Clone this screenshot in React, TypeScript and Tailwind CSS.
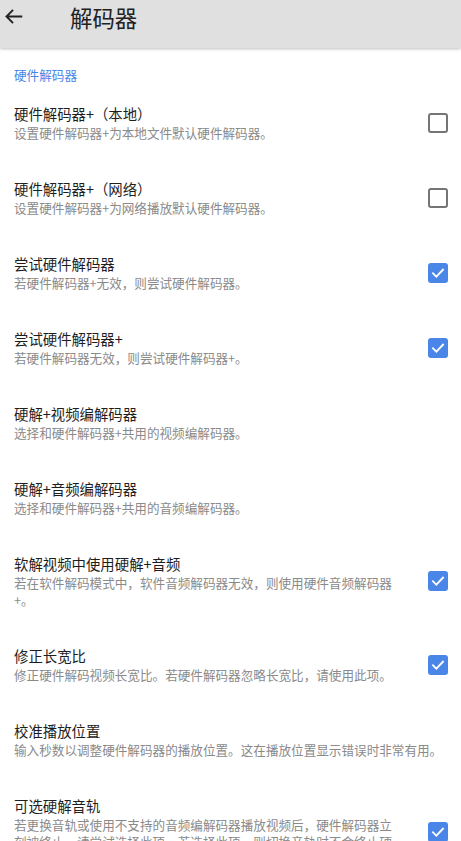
import React from "react";

const font = { fontFamily: '"Noto Sans CJK SC", "Noto Sans", sans-serif' };

type Item = {
  title: string;
  summary: string;
  checked?: boolean;
};

const items: Item[] = [
  { title: "硬件解码器+（本地）", summary: "设置硬件解码器+为本地文件默认硬件解码器。", checked: false },
  { title: "硬件解码器+（网络）", summary: "设置硬件解码器+为网络播放默认硬件解码器。", checked: false },
  { title: "尝试硬件解码器", summary: "若硬件解码器+无效，则尝试硬件解码器。", checked: true },
  { title: "尝试硬件解码器+", summary: "若硬件解码器无效，则尝试硬件解码器+。", checked: true },
  { title: "硬解+视频编解码器", summary: "选择和硬件解码器+共用的视频编解码器。" },
  { title: "硬解+音频编解码器", summary: "选择和硬件解码器+共用的音频编解码器。" },
  {
    title: "软解视频中使用硬解+音频",
    summary: "若在软件解码模式中，软件音频解码器无效，则使用硬件音频解码器+。",
    checked: true,
  },
  { title: "修正长宽比", summary: "修正硬件解码视频长宽比。若硬件解码器忽略长宽比，请使用此项。", checked: true },
  { title: "校准播放位置", summary: "输入秒数以调整硬件解码器的播放位置。这在播放位置显示错误时非常有用。" },
  {
    title: "可选硬解音轨",
    summary: "若更换音轨或使用不支持的音频编解码器播放视频后，硬件解码器立刻被终止，请尝试选择此项。若选择此项，则切换音轨时不会终止硬件解码器。",
    checked: true,
  },
];

function Checkbox({ checked }: { checked: boolean }) {
  if (checked) {
    return (
      <div className="w-[20px] h-[20px] rounded-[3px] bg-[#4a86e8] flex items-center justify-center">
        <svg width="16" height="16" viewBox="0 0 24 24" fill="none">
          <path d="M4.5 12.5l5 5L19.5 7" stroke="white" strokeWidth="2.8" strokeLinecap="square" />
        </svg>
      </div>
    );
  }
  return <div className="w-[20px] h-[20px] rounded-[3px] border-2 border-[#757575]" />;
}

function Row({ item }: { item: Item }) {
  const hasBox = item.checked !== undefined;
  return (
    <div className="flex items-center pl-[14px] pr-[13px] py-[19px]">
      <div className="flex-1 min-w-0">
        <div className="text-[14.4px] leading-[20px] text-[#1e1e1e]">{item.title}</div>
        <div className="text-[12.6px] leading-[17px] text-[#8a8a8a]">{item.summary}</div>
      </div>
      {hasBox && (
        <div className="w-[52px] flex justify-end shrink-0">
          <Checkbox checked={!!item.checked} />
        </div>
      )}
    </div>
  );
}

export default function App() {
  return (
    <div className="w-[461px] h-[841px] overflow-hidden bg-white" style={font}>
      <div className="h-[48px] bg-[#e0e0e0] flex items-start pt-[2px] shadow-[0_1px_3px_rgba(0,0,0,0.25)] relative z-10">
        <div className="w-[70px] pl-[3px] pt-[4px] flex items-center">
          <svg width="21" height="21" viewBox="0 0 24 24" fill="none">
            <path d="M22 12H4M11.5 4.5L4 12l7.5 7.5" stroke="#222" strokeWidth="2.2" />
          </svg>
        </div>
        <div className="text-[22.4px] leading-[30px] text-[#212121]">解码器</div>
      </div>
      <div className="pl-[14px] pt-[18px] pb-[2px] text-[12.6px] leading-[17px] text-[#4a86e8]">硬件解码器</div>
      {items.map((it) => (
        <Row key={it.title} item={it} />
      ))}
    </div>
  );
}
